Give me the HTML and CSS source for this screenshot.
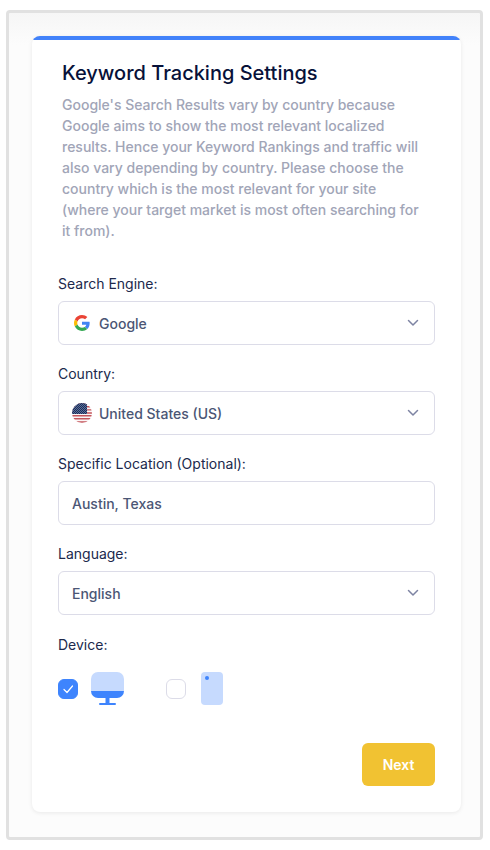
FILE: index.html
```
<!DOCTYPE html>
<html lang="en">
<head>
<meta charset="utf-8">
<meta name="viewport" content="width=device-width, initial-scale=1">
<title>Keyword Tracking Settings</title>
<link rel="stylesheet" href="styles.css">
</head>
<body>
<main class="frame">
  <form class="card">
    <header class="intro">
      <h1>Keyword Tracking Settings</h1>
      <p>Google's Search Results vary by country because Google aims to show the most relevant localized results. Hence your Keyword Rankings and traffic will also vary depending by country. Please choose the country which is the most relevant for your site (where your target market is most often searching for it from).</p>
    </header>

    <div class="field">
      <label for="engine">Search Engine:</label>
      <div class="control">
        <select id="engine" class="has-icon"><option>Google</option></select>
        <svg class="lead google" viewBox="0 0 48 48" aria-hidden="true">
          <path fill="#ea4335" d="M24 9.500c3.540 0 6.710 1.220 9.210 3.600l6.850-6.850C35.900 2.380 30.470 0 24 0 14.620 0 6.510 5.380 2.560 13.220l7.980 6.190C12.430 13.720 17.740 9.500 24 9.500z"/>
          <path fill="#4285f4" d="M46.980 24.550c0-1.570-.15-3.090-.38-4.550H24v9.020h12.940c-.58 2.960-2.260 5.480-4.780 7.180l7.730 6c4.510-4.180 7.090-10.360 7.090-17.650z"/>
          <path fill="#fbbc05" d="M10.530 28.590c-.48-1.450-.76-2.990-.76-4.590s.27-3.140.76-4.590l-7.980-6.190C.92 16.460 0 20.120 0 24s.92 7.540 2.560 10.780z"/>
          <path fill="#34a853" d="M24 48c6.480 0 11.930-2.130 15.890-5.810l-7.730-6c-2.150 1.450-4.920 2.300-8.160 2.300-6.260 0-11.570-4.220-13.470-9.910l-7.980 6.190C6.510 42.620 14.620 48 24 48z"/>
        </svg>
        <svg class="chevron" viewBox="0 0 12 8" aria-hidden="true"><path d="M1.500 1.500 6 6l4.500-4.500"/></svg>
      </div>
    </div>

    <div class="field">
      <label for="country">Country:</label>
      <div class="control">
        <select id="country" class="has-icon"><option>United States (US)</option></select>
        <svg class="lead flag" viewBox="0 0 20 20" aria-hidden="true">
          <defs>
            <clipPath id="disc"><circle cx="10" cy="10" r="10"/></clipPath>
            <pattern id="stars" width="2" height="2" patternUnits="userSpaceOnUse"><path fill="#8d98b8" d="M0 0h1v1H0zM1 1h1v1H1z"/></pattern>
          </defs>
          <g clip-path="url(#disc)">
            <path fill="#fbf6f6" d="M0 0h20v20H0z"/>
            <path stroke="#c4555c" stroke-width="1.400" d="M0 .7h20M0 3.800h20M0 6.900h20M0 10h20M0 12.700h20M0 15.700h20M0 19h20"/>
            <path fill="#192f5d" d="M0 0h15v11H0z"/>
            <path fill="url(#stars)" opacity=".6" d="M0 0h15v11H0z"/>
          </g>
        </svg>
        <svg class="chevron" viewBox="0 0 12 8" aria-hidden="true"><path d="M1.500 1.500 6 6l4.500-4.500"/></svg>
      </div>
    </div>

    <div class="field">
      <label for="location">Specific Location (Optional):</label>
      <div class="control"><input id="location" type="text" value="Austin, Texas"></div>
    </div>

    <div class="field">
      <label for="language">Language:</label>
      <div class="control">
        <select id="language"><option>English</option></select>
        <svg class="chevron" viewBox="0 0 12 8" aria-hidden="true"><path d="M1.500 1.500 6 6l4.500-4.500"/></svg>
      </div>
    </div>

    <fieldset class="devices">
      <legend>Device:</legend>
      <div class="device-row">
        <label class="device">
          <input type="checkbox" checked aria-label="Desktop">
          <svg width="33" height="33" viewBox="0 0 33 33" aria-hidden="true">
            <path fill="#c6dafe" d="M7 0h19a7 7 0 0 1 7 7v12H0V7a7 7 0 0 1 7-7z"/>
            <path fill="#3e84fd" d="M0 19h33a7 7 0 0 1-7 7h-7.500v5H24a1 1 0 0 1 0 2H9a1 1 0 0 1 0-2h5.500v-5H7a7 7 0 0 1-7-7z"/>
          </svg>
        </label>
        <label class="device">
          <input type="checkbox" aria-label="Mobile">
          <svg width="22" height="33" viewBox="0 0 22 33" aria-hidden="true">
            <rect width="22" height="33" rx="4" fill="#c6dafe"/>
            <circle cx="6" cy="6" r="2" fill="#3e84fd"/>
          </svg>
        </label>
      </div>
    </fieldset>

    <div class="actions"><button type="submit">Next</button></div>
  </form>
</main>
</body>
</html>
```
FILE: styles.css
```
* {
  box-sizing: border-box;
}

body {
  margin: 0;
  background: #fff;
  font-family: Inter, "Liberation Sans", sans-serif;
  font-size: 14px;
}

.frame {
  margin: 10px 7px 10px 6px;
  padding: 23px 19px 25px 23px;
  border: 3px solid #e1e1e1;
  border-radius: 4px;
  background: linear-gradient(#f6f6f6, #fcfcfc 32px);
}

.card {
  padding: 25px 26px 26px;
  border-radius: 8px;
  background: linear-gradient(#4282fa, #4282fa) top / 100% 4px no-repeat #fff;
  box-shadow: 0 1px 4px rgba(0, 0, 0, 0.08);
}

.intro {
  margin: 0 14px 34px 4px;
}

h1 {
  margin: 0 0 9px;
  color: #071139;
  font-size: 20px;
  font-weight: 500;
  line-height: 24px;
}

.intro p {
  margin: 0;
  color: #a1a5b7;
  font-weight: 500;
  line-height: 21px;
}

.field {
  display: flex;
  flex-direction: column;
  gap: 8px;
  margin-bottom: 20px;
}

.field > label,
legend {
  color: #20294c;
  line-height: 18px;
}

.control {
  display: grid;
  align-items: center;
}

.control > * {
  grid-area: 1 / 1;
}

select,
input[type="text"] {
  appearance: none;
  width: 100%;
  height: 44px;
  margin: 0;
  padding: 0 13px;
  border: 1px solid #dcdce8;
  border-radius: 6px;
  background: #fff;
  color: #4b5675;
  font: inherit;
  font-weight: 500;
}

select.has-icon {
  padding-left: 40px;
}

.lead,
.chevron {
  pointer-events: none;
}

.google {
  width: 16px;
  height: 16px;
  margin-left: 16px;
}

.flag {
  width: 20px;
  height: 20px;
  margin-left: 14px;
}

.chevron {
  justify-self: end;
  width: 12px;
  height: 8px;
  margin-right: 16px;
  fill: none;
  stroke: #7e84a3;
  stroke-width: 1.5;
  stroke-linecap: round;
  stroke-linejoin: round;
}

.devices {
  margin: 21px 0 0;
  padding: 0;
  border: 0;
}

legend {
  padding: 0;
}

.device-row {
  display: flex;
  gap: 42px;
  padding-top: 18px;
}

.device {
  display: flex;
  align-items: center;
  gap: 13px;
}

.device + .device {
  gap: 15px;
}

input[type="checkbox"] {
  appearance: none;
  width: 20px;
  height: 20px;
  margin: 0;
  border: 1px solid #dcdce8;
  border-radius: 6px;
  background: #fff;
}

input[type="checkbox"]:checked {
  border-color: #3e84fd;
  background: #3e84fd url("data:image/svg+xml,%3Csvg xmlns='http://www.w3.org/2000/svg' viewBox='0 0 18 18'%3E%3Cpath d='M5 9.500l3 3 5.500-6.500' fill='none' stroke='white' stroke-width='1.200' stroke-linecap='round' stroke-linejoin='round'/%3E%3C/svg%3E") center / 18px no-repeat;
}

.actions {
  display: flex;
  justify-content: flex-end;
  margin-top: 38px;
}

button {
  min-width: 73px;
  height: 43px;
  padding: 0 20px;
  border: 0;
  border-radius: 6px;
  background: #f1c232;
  color: #fff;
  font: inherit;
  font-weight: 600;
}
```
